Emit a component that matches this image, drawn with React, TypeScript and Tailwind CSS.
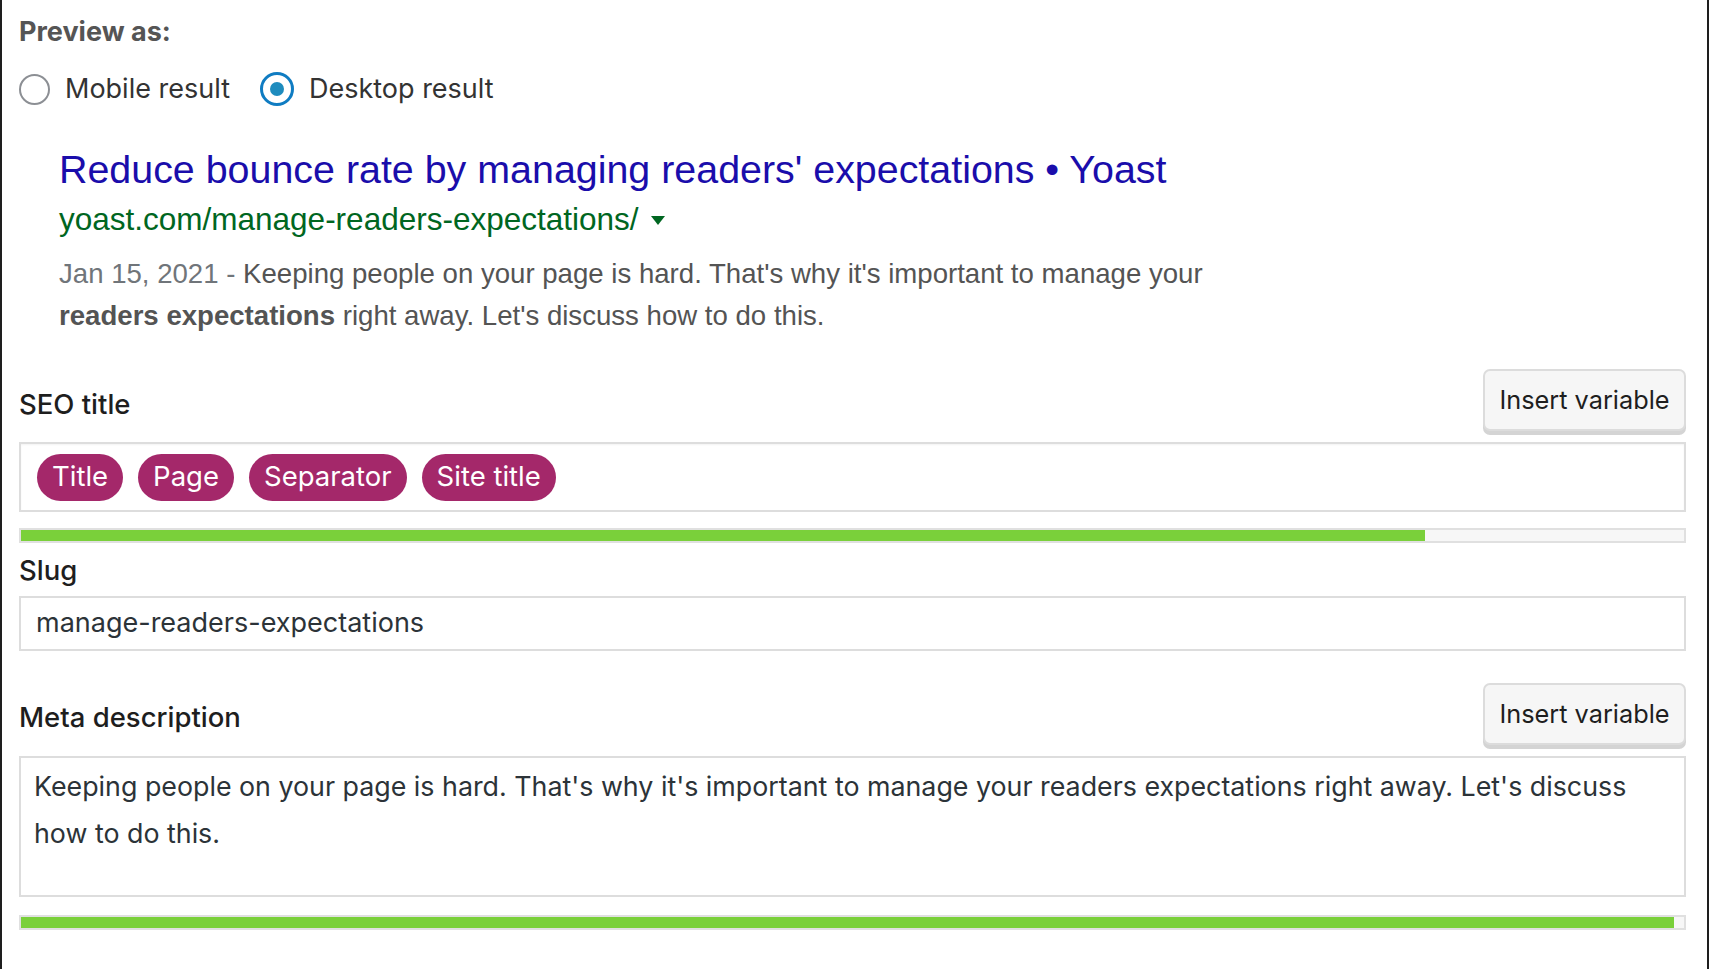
import React from 'react';

const ui = { fontFamily: 'Inter, "Noto Sans", sans-serif' };
const serp = { fontFamily: '"Liberation Sans", Arial, sans-serif' };

function InsertVariable() {
  return (
    <button
      type="button"
      className="h-[62px] w-[203px] rounded-[7px] border-2 border-[#dcdcdc] bg-[#f6f6f6] text-[25.3px] text-[#1e1e1e] shadow-[0_4px_0_#d4d4d4]"
      style={ui}
    >
      Insert variable
    </button>
  );
}

function ScoreBar({ fill }: { fill: string }) {
  return (
    <div className="h-[15px] w-full border-2 border-[#e0e0e0] bg-[#f7f7f7]">
      <div className={`h-full bg-[#7ad03a] ${fill}`} />
    </div>
  );
}

function Radio({ checked, label }: { checked?: boolean; label: string }) {
  return (
    <label className="flex items-center gap-[15px]">
      {checked ? (
        <span className="flex h-[34px] w-[34px] items-center justify-center rounded-full border-[3.5px] border-[#0f7cc2] bg-white">
          <span className="h-[14px] w-[14px] rounded-full bg-[#1e8cbe]" />
        </span>
      ) : (
        <span className="h-[31px] w-[31px] rounded-full border-2 border-[#8c8f94] bg-white" />
      )}
      <span className="text-[27px] text-[#333]">{label}</span>
    </label>
  );
}

export default function App() {
  const pills = ['Title', 'Page', 'Separator', 'Site title'];

  return (
    <div
      className="min-h-[969px] w-full border-x-2 border-[#1e1e1e] bg-white pl-[17px] pr-[21px] pt-[14px]"
      style={ui}
    >
      <p className="h-[36px] text-[27px] font-bold leading-[36px] text-[#555]">Preview as:</p>

      <div className="mt-[21px] flex h-[36px] items-center gap-[30px]">
        <Radio label="Mobile result" />
        <Radio checked label="Desktop result" />
      </div>

      {/* google snippet */}
      <div className="ml-[40px]" style={serp}>
        <div className="mt-[38px] text-[39.4px] leading-[48px] text-[#1a0dab]">
          Reduce bounce rate by managing readers' expectations • Yoast
        </div>
        <div className="mt-[6px] flex items-center text-[31.5px] leading-[40px] text-[#006621]">
          yoast.com/manage-readers-expectations/
          <span className="ml-[12px] mt-[2px] h-0 w-0 border-x-[7px] border-t-[9px] border-x-transparent border-t-[#006621]" />
        </div>
        <p className="mt-[14px] text-[27.6px] leading-[42px] text-[#545454]">
          <span className="text-[#70757a]">Jan 15, 2021 - </span>
          Keeping people on your page is hard. That's why it's important to manage your
          <br />
          <b>readers expectations</b> right away. Let's discuss how to do this.
        </p>
      </div>

      {/* SEO title */}
      <div className="mt-[32px] flex items-start justify-between">
        <span className="mt-[18px] text-[27.5px] font-medium leading-[34px] text-[#1e1e1e]">SEO title</span>
        <InsertVariable />
      </div>
      <div className="mt-[11px] flex h-[70px] items-center gap-[15px] border-2 border-[#dddddd] pl-[16px] shadow-[inset_0_1px_2px_rgba(0,0,0,0.05)]">
        {pills.map((p) => (
          <span
            key={p}
            className="flex h-[47px] items-center rounded-full bg-[#a4286a] px-[15px] text-[27.5px] text-white"
          >
            {p}
          </span>
        ))}
      </div>
      <div className="mt-[16px]">
        <ScoreBar fill="w-[84.4%]" />
      </div>

      {/* Slug */}
      <div className="mt-[10px] text-[27.5px] font-medium leading-[34px] text-[#1e1e1e]">Slug</div>
      <div className="mt-[9px] flex h-[55px] items-center border-2 border-[#dddddd] pl-[15px] text-[27px] text-[#2c3338]">
        manage-readers-expectations
      </div>

      {/* Meta description */}
      <div className="mt-[32px] flex items-start justify-between">
        <span className="mt-[17px] text-[27.5px] font-medium leading-[34px] text-[#1e1e1e]">Meta description</span>
        <InsertVariable />
      </div>
      <div className="mt-[11px] h-[141px] border-2 border-[#dddddd] pl-[13px] pt-[5px] text-[26.8px] leading-[47px] text-[#2c3338]">
        Keeping people on your page is hard. That's why it's important to manage your readers expectations right away. Let's discuss
        <br />
        how to do this.
      </div>
      <div className="mt-[18px]">
        <ScoreBar fill="w-[99.4%]" />
      </div>
    </div>
  );
}
